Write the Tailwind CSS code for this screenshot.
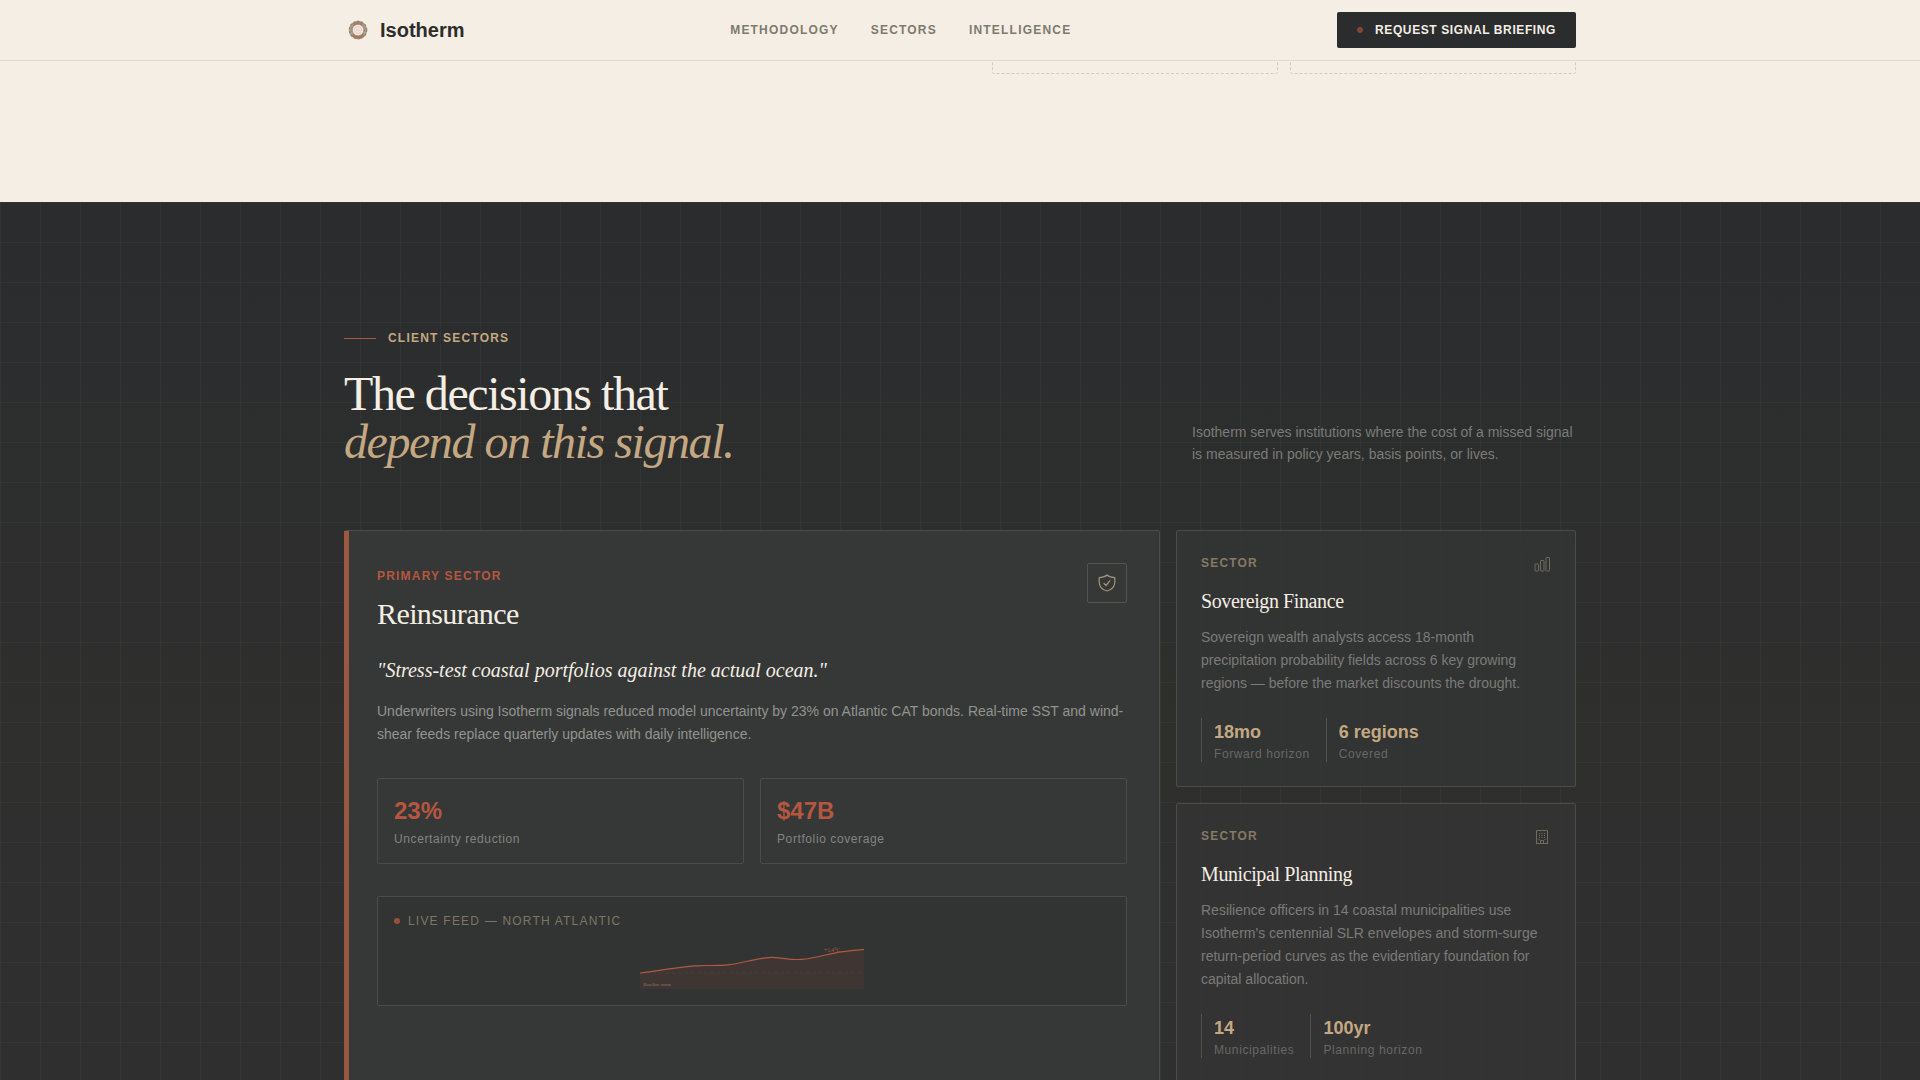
<!DOCTYPE html>
<html lang="en">
<head>
    <meta charset="UTF-8">
    <meta name="viewport" content="width=device-width, initial-scale=1.0">
    <title>Isotherm</title>
    <script src="https://cdn.jsdelivr.net/npm/@tailwindcss/browser@4"></script>
</head>
<body class="bg-[#f5eee4] font-['Liberation_Sans',Arial,sans-serif] text-[#2d2d2b]">
    <!-- Navigation -->
    <header class="fixed inset-x-0 top-0 z-10 border-b border-[#dfdccf] bg-[#f5eee4]">
        <nav class="max-w-7xl mx-auto px-6 h-15 flex items-center justify-between">
            <a href="#" class="flex items-center gap-2">
                <svg class="size-7" viewBox="0 0 28 28" fill="none">
                    <circle cx="14" cy="14" r="7.2" stroke="#b09d88" stroke-width="4"/>
                    <path d="M8.500 19A7.500 7.500 0 0 0 19.500 19" stroke="#ad7860" stroke-width="3"/>
                    <path d="M9.500 8.500A7.200 7.200 0 0 1 18.500 8.500" stroke="#a3826c" stroke-width="3"/>
                    <circle cx="14" cy="14" r="8.700" stroke="#8a8272" stroke-width="1.200" stroke-dasharray="2 2"/>
                    <circle cx="14" cy="14" r="6.400" stroke="#8f7c69" stroke-width="1" stroke-dasharray="1.500 2"/>
                    <circle cx="14" cy="14" r="5" fill="#f3e9df"/>
                    <circle cx="14" cy="14" r="3.500" stroke="#e3ccc3" stroke-width="1"/>
                    <circle cx="14" cy="14" r="1.800" fill="#ecd2cb"/>
                </svg>
                <span class="text-xl font-bold">Isotherm</span>
            </a>
            <div class="flex gap-8 text-xs font-bold tracking-widest uppercase text-[#7d7a6e]">
                <a href="#methodology">Methodology</a>
                <a href="#sectors">Sectors</a>
                <a href="#intelligence">Intelligence</a>
            </div>
            <button type="button" class="h-9 px-5 flex items-center gap-3 rounded-xs bg-[#2a2c2d] text-xs font-bold tracking-wider uppercase text-[#f5eee4]">
                <span class="size-1.5 rounded-full bg-[#834636]"></span>
                Request Signal Briefing
            </button>
        </nav>
    </header>

    <main>
        <!-- Methodology (tail of the section) -->
        <section id="methodology" class="pt-4 pb-32">
            <div class="max-w-7xl mx-auto px-6 grid grid-cols-2 gap-16">
                <div class="col-start-2 grid grid-cols-2 gap-3">
                    <div class="h-[58px] border border-dashed border-[#d1cebd] rounded-xs"></div>
                    <div class="h-[58px] border border-dashed border-[#d1cebd] rounded-xs"></div>
                </div>
            </div>
        </section>

        <!-- Client sectors -->
        <section id="sectors" class="py-32 bg-[#2c2e2e] bg-[linear-gradient(to_right,#f5eee409_1px,transparent_1px),linear-gradient(to_bottom,#f5eee409_1px,transparent_1px),linear-gradient(to_bottom,#2b2c2e,#2d2e2d_35%,#302f2f_70%)] bg-[size:40px_40px,40px_40px,100%_100%]">
            <div class="max-w-7xl mx-auto px-6">
                <div class="mb-6 flex items-center gap-3">
                    <span class="w-8 h-px bg-[#a35d46]"></span>
                    <span class="text-xs font-bold tracking-widest uppercase text-[#c4a882]">Client Sectors</span>
                </div>
                <div class="mb-16 flex items-end justify-between">
                    <h2 class="font-['Liberation_Serif',serif] text-5xl leading-none tracking-[-0.03em] text-[#f5eee4]">
                        The decisions that<br>
                        <em class="text-[#c4a882]">depend on this signal.</em>
                    </h2>
                    <p class="w-96 text-sm leading-relaxed text-[#7b7b78]">Isotherm serves institutions where the cost of a missed signal is measured in policy years, basis points, or lives.</p>
                </div>

                <div class="grid grid-cols-12 gap-4">
                    <!-- Primary card -->
                    <article class="relative col-span-8 p-8 border border-[#4b4c48] rounded-xs bg-[#363837]">
                        <div class="absolute -left-px inset-y-0 w-[5px] bg-linear-to-b from-[#9d5842] to-[#96563f]"></div>
                        <div class="mb-6 flex items-start justify-between">
                            <div>
                                <div><span class="text-xs font-bold tracking-widest uppercase text-[#b5573f]">Primary Sector</span></div>
                                <h3 class="mt-2 font-['Liberation_Serif',serif] text-3xl leading-tight tracking-[-0.02em] text-[#f5eee4]">Reinsurance</h3>
                            </div>
                            <div class="size-10 flex items-center justify-center border border-[#54544e] rounded-xs text-[#a0957b]">
                                <svg class="size-5" viewBox="0 0 20 20" fill="none" stroke="currentColor" stroke-width="1.2" stroke-linecap="round" stroke-linejoin="round">
                                    <path d="M10 2C8 3.900 5 4.600 2.200 4.600V9C2.200 13.500 5 16.800 10 18C15 16.800 17.800 13.500 17.800 9V4.600C15 4.600 12 3.900 10 2Z"/>
                                    <path d="M7 10.500L9 12.500L12.800 7.800"/>
                                </svg>
                            </div>
                        </div>
                        <p class="mb-4 font-['Liberation_Serif',serif] italic text-xl leading-snug text-[#f5eee4]">"Stress-test coastal portfolios against the actual ocean."</p>
                        <p class="mb-8 text-sm leading-relaxed text-[#92938f]">Underwriters using Isotherm signals reduced model uncertainty by 23% on Atlantic CAT bonds. Real-time SST and wind-shear feeds replace quarterly updates with daily intelligence.</p>
                        <dl class="mb-8 grid grid-cols-2 gap-4">
                            <div class="p-4 flex flex-col-reverse gap-1 border border-[#4a4c47] rounded-xs">
                                <dt class="text-xs tracking-wider text-[#828481]">Uncertainty reduction</dt>
                                <dd class="text-2xl font-bold text-[#b5573f]">23%</dd>
                            </div>
                            <div class="p-4 flex flex-col-reverse gap-1 border border-[#4a4c47] rounded-xs">
                                <dt class="text-xs tracking-wider text-[#828481]">Portfolio coverage</dt>
                                <dd class="text-2xl font-bold text-[#b5573f]">$47B</dd>
                            </div>
                        </dl>
                        <div class="p-4 border border-[#4a4c47] rounded-xs bg-[#323433]">
                            <div class="mb-3 flex items-center gap-2">
                                <span class="size-1.5 rounded-full bg-[#99503b]"></span>
                                <span class="text-xs tracking-widest uppercase text-[#7e7663]">Live Feed — North Atlantic</span>
                            </div>
                            <svg class="w-full h-12" viewBox="0 0 280 60" fill="none">
                                <path d="M0 40C26 37 50 32 68 31S95 31.500 112 29.500S150 20 166 20.500S185 24 202 23S240 14.500 252 13.500S272 11 280 10.500V60H0Z" fill="#3f3634"/>
                                <path d="M0 40H280" stroke="#c4a882" stroke-opacity=".1" stroke-dasharray="4 4"/>
                                <path d="M0 40C26 37 50 32 68 31S95 31.500 112 29.500S150 20 166 20.500S185 24 202 23S240 14.500 252 13.500S272 11 280 10.500" stroke="#b0593f" stroke-width="1.500"/>
                                <text x="4" y="56" class="font-['Liberation_Serif',serif] text-[6px]" fill="#857b68">Baseline norm</text>
                                <text x="230" y="14" class="font-['Liberation_Serif',serif] text-[7px]" fill="#b5573f">+1.4°C</text>
                            </svg>
                        </div>
                    </article>

                    <!-- Secondary cards -->
                    <div class="col-span-4 flex flex-col gap-4">
                        <article class="p-6 border border-[#4b4c48] rounded-xs bg-[#333434]/80">
                            <div class="mb-4 flex items-start justify-between">
                                <span class="text-xs font-bold tracking-widest uppercase text-[#857a63]">Sector</span>
                                <svg class="size-4.5 text-[#716b5b]" viewBox="0 0 18 18" fill="none" stroke="currentColor">
                                    <rect x="2" y="9" width="3.500" height="7" rx=".5"/>
                                    <rect x="7.500" y="5.500" width="3.500" height="10.500" rx=".5"/>
                                    <rect x="13" y="2.500" width="3.500" height="13.500" rx=".5"/>
                                </svg>
                            </div>
                            <h3 class="mb-3 font-['Liberation_Serif',serif] text-xl leading-tight tracking-[-0.02em] text-[#f5eee4]">Sovereign Finance</h3>
                            <p class="mb-6 text-sm leading-relaxed text-[#7b7b78]">Sovereign wealth analysts access 18-month precipitation probability fields across 6 key growing regions — before the market discounts the drought.</p>
                            <dl class="flex gap-4">
                                <div class="pl-3 flex flex-col-reverse border-l border-[#52524c]">
                                    <dt class="text-xs tracking-wider text-[#686865]">Forward horizon</dt>
                                    <dd class="text-lg font-bold text-[#c4a882]">18mo</dd>
                                </div>
                                <div class="pl-3 flex flex-col-reverse border-l border-[#52524c]">
                                    <dt class="text-xs tracking-wider text-[#686865]">Covered</dt>
                                    <dd class="text-lg font-bold text-[#c4a882]">6 regions</dd>
                                </div>
                            </dl>
                        </article>
                        <article class="p-6 border border-[#4b4c48] rounded-xs bg-[#343434]/80">
                            <div class="mb-4 flex items-start justify-between">
                                <span class="text-xs font-bold tracking-widest uppercase text-[#857a63]">Sector</span>
                                <svg class="size-4.5 text-[#716b5b]" viewBox="0 0 18 18" fill="none" stroke="currentColor">
                                    <path d="M3.500 15.500V2.500H14.500V15.500M3 15.500H15M7.500 15.500V12.500H10.500V15.500"/>
                                    <path d="M6 5.500H7M8.500 5.500H9.500M11 5.500H12M6 7.500H7M8.500 7.500H9.500M11 7.500H12M6 9.500H7M8.500 9.500H9.500M11 9.500H12M5.500 11.500H6.500M11.500 11.500H12.500"/>
                                </svg>
                            </div>
                            <h3 class="mb-3 font-['Liberation_Serif',serif] text-xl leading-tight tracking-[-0.02em] text-[#f5eee4]">Municipal Planning</h3>
                            <p class="mb-6 text-sm leading-relaxed text-[#7b7b78]">Resilience officers in 14 coastal municipalities use Isotherm's centennial SLR envelopes and storm-surge return-period curves as the evidentiary foundation for capital allocation.</p>
                            <dl class="flex gap-4">
                                <div class="pl-3 flex flex-col-reverse border-l border-[#52524c]">
                                    <dt class="text-xs tracking-wider text-[#686865]">Municipalities</dt>
                                    <dd class="text-lg font-bold text-[#c4a882]">14</dd>
                                </div>
                                <div class="pl-3 flex flex-col-reverse border-l border-[#52524c]">
                                    <dt class="text-xs tracking-wider text-[#686865]">Planning horizon</dt>
                                    <dd class="text-lg font-bold text-[#c4a882]">100yr</dd>
                                </div>
                            </dl>
                        </article>
                    </div>
                </div>
            </div>
        </section>
    </main>
</body>
</html>
